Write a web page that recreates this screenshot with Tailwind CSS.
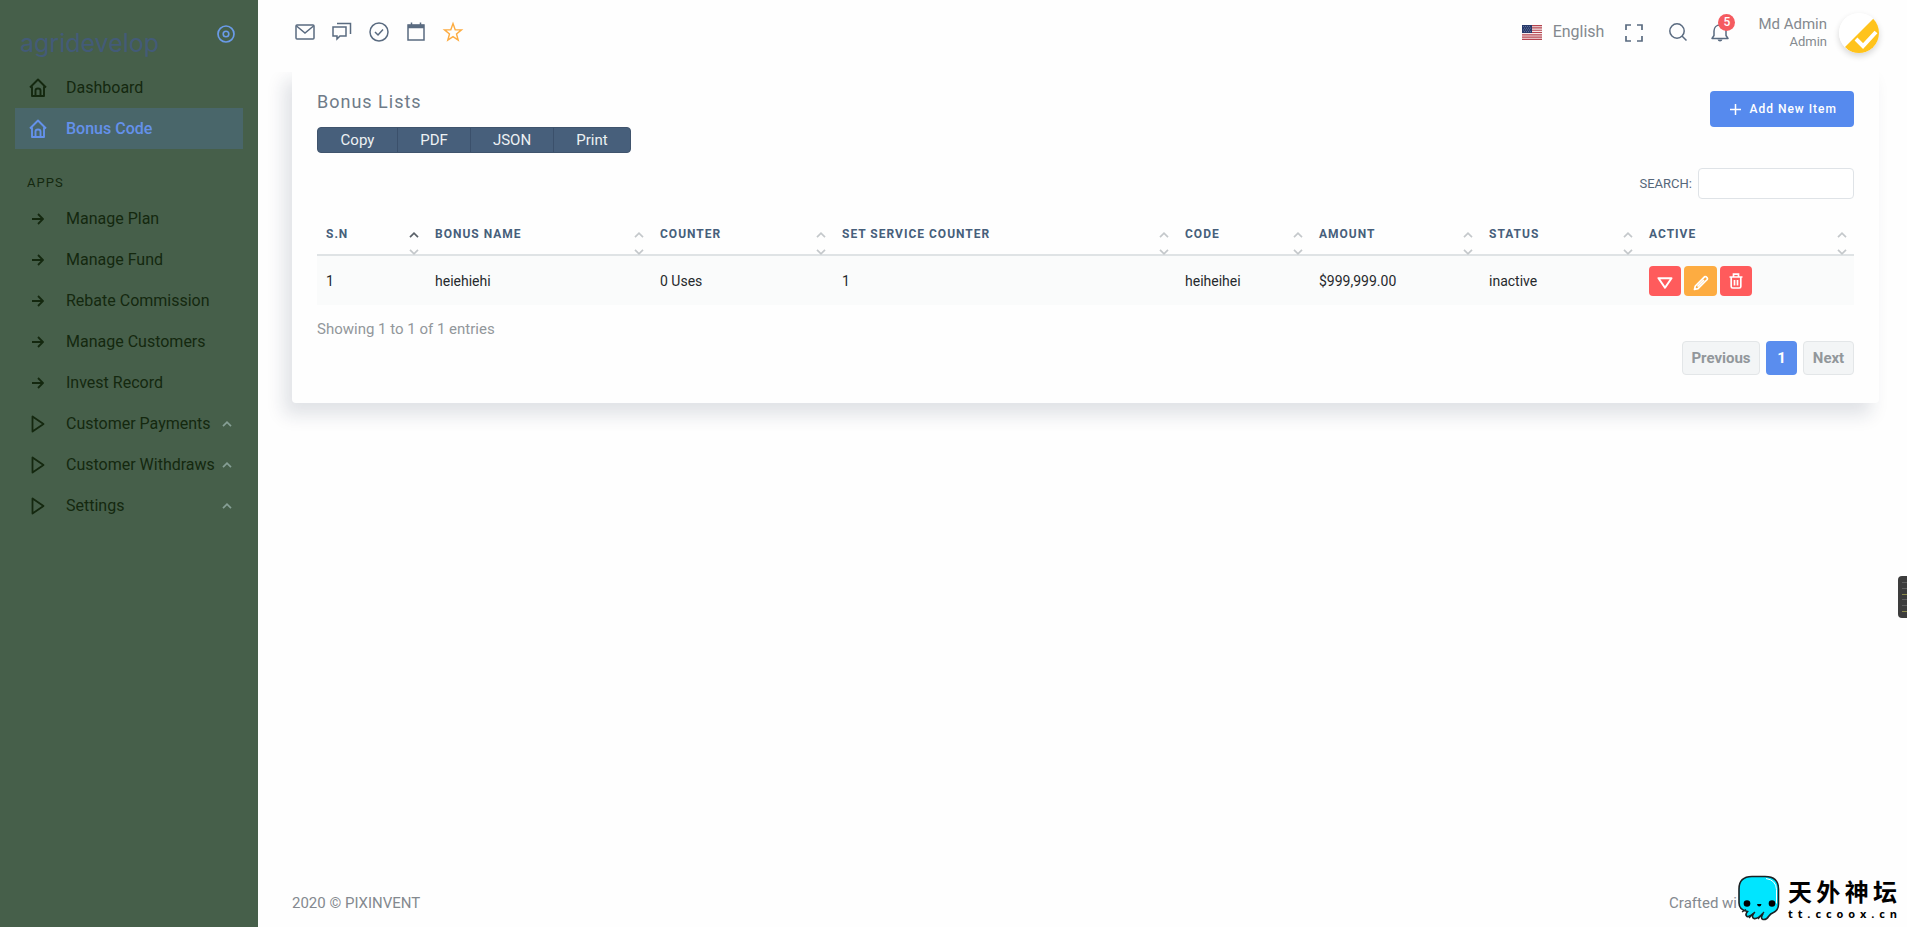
<!DOCTYPE html>
<html lang="en">
<head>
<meta charset="utf-8">
<meta name="viewport" content="width=device-width, initial-scale=1">
<title>Bonus Lists</title>
<script src="https://cdn.jsdelivr.net/npm/@tailwindcss/browser@4"></script>
</head>
<body class="bg-[#fefefe] font-['Roboto','Noto_Sans_CJK_SC',sans-serif] text-[15px] text-[#84898f]">
<svg class="hidden" aria-hidden="true">
  <symbol id="home" viewBox="0 0 18 20"><path d="M1 9.5 9 1.5l8 8M3 8.5V18h12V8.5M6.5 18v-5.500q0-2 2.500-2t2.500 2V18" fill="none" stroke="currentColor" stroke-width="1.900" stroke-linejoin="round"/></symbol>
  <symbol id="arrow" viewBox="0 0 12 12"><path d="M0 6h11M6 1l5 5-5 5" fill="none" stroke="currentColor" stroke-width="1.800"/></symbol>
  <symbol id="play" viewBox="0 0 14 18"><path d="M1.500 1.500v15L12.500 9z" fill="none" stroke="currentColor" stroke-width="1.800" stroke-linejoin="round"/></symbol>
  <symbol id="up" viewBox="0 0 10 6"><path d="M1 5.200 5 1.200l4 4" fill="none" stroke="currentColor" stroke-width="1.700"/></symbol>
  <symbol id="down" viewBox="0 0 10 6"><path d="M1 .8l4 4 4-4" fill="none" stroke="currentColor" stroke-width="1.700"/></symbol>
</svg>
<div class="flex min-h-screen">
  <aside class="w-[258px] shrink-0 bg-[#465f4a] text-[#14280f]">
    <div class="flex h-[67px] items-start justify-between pl-5 pr-[23px] pt-[25px]">
      <a href="#" class="font-['Inter'] text-[25px] leading-9 font-normal text-[#435b78]">agridevelop</a>
      <button type="button" aria-label="Toggle menu" class="text-[#6a9be8]">
        <svg class="block size-[18px]" viewBox="0 0 18 18" fill="none" stroke="currentColor"><circle cx="9" cy="9" r="8" stroke-width="1.700"/><circle cx="9" cy="9" r="2.800" stroke-width="1.600"/></svg>
      </button>
    </div>
    <nav class="px-[15px] text-base">
      <a href="#" class="flex h-[41px] items-center pl-[14px]"><svg class="mr-[19px] h-5 w-[18px]"><use href="#home"/></svg>Dashboard</a>
      <a href="#" class="flex h-[41px] items-center bg-[#49666a] pl-[14px] font-medium text-[#6491ea]"><svg class="mr-[19px] h-5 w-[18px]"><use href="#home"/></svg>Bonus Code</a>
      <h2 class="mt-6 mb-[5px] pl-3 text-[13px] leading-5 tracking-[1px]">APPS</h2>
      <a href="#" class="flex h-[41px] items-center pl-[17px]"><svg class="mr-[22px] size-3"><use href="#arrow"/></svg>Manage Plan</a>
      <a href="#" class="flex h-[41px] items-center pl-[17px]"><svg class="mr-[22px] size-3"><use href="#arrow"/></svg>Manage Fund</a>
      <a href="#" class="flex h-[41px] items-center pl-[17px]"><svg class="mr-[22px] size-3"><use href="#arrow"/></svg>Rebate Commission</a>
      <a href="#" class="flex h-[41px] items-center pl-[17px]"><svg class="mr-[22px] size-3"><use href="#arrow"/></svg>Manage Customers</a>
      <a href="#" class="flex h-[41px] items-center pl-[17px]"><svg class="mr-[22px] size-3"><use href="#arrow"/></svg>Invest Record</a>
      <a href="#" class="flex h-[41px] items-center pl-4 pr-[11px]"><svg class="mr-[21px] h-[18px] w-[14px]"><use href="#play"/></svg>Customer Payments<svg class="ml-auto h-[6px] w-[10px] text-[#869f95]"><use href="#up"/></svg></a>
      <a href="#" class="flex h-[41px] items-center pl-4 pr-[11px]"><svg class="mr-[21px] h-[18px] w-[14px]"><use href="#play"/></svg>Customer Withdraws<svg class="ml-auto h-[6px] w-[10px] text-[#869f95]"><use href="#up"/></svg></a>
      <a href="#" class="flex h-[41px] items-center pl-4 pr-[11px]"><svg class="mr-[21px] h-[18px] w-[14px]"><use href="#play"/></svg>Settings<svg class="ml-auto h-[6px] w-[10px] text-[#869f95]"><use href="#up"/></svg></a>
    </nav>
  </aside>

  <div class="flex min-w-0 flex-1 flex-col">
    <header class="z-10 flex h-[72px] items-start justify-between bg-[#fefefe] pl-9 pr-7">
      <div class="flex gap-[15px] pt-[21px] text-[#5a6b80]">
        <button type="button" aria-label="Email"><svg class="block size-[22px]" viewBox="0 0 22 22" fill="none" stroke="currentColor" stroke-width="1.500"><rect x="2" y="4" width="18" height="14" rx="1"/><path d="m2.500 5 8.500 7 8.500-7"/></svg></button>
        <button type="button" aria-label="Chat"><svg class="block size-[22px]" viewBox="0 0 22 22" fill="none" stroke="currentColor" stroke-width="1.500"><path d="M2 6h13v9H9l-3 3v-3H2zM6 2.500h13.500V13"/></svg></button>
        <button type="button" aria-label="Tasks"><svg class="block size-[22px]" viewBox="0 0 22 22" fill="none" stroke="currentColor" stroke-width="1.500"><circle cx="11" cy="11" r="9"/><path d="m7 11 3 3 5-5.500"/></svg></button>
        <button type="button" aria-label="Calendar"><svg class="block size-[22px]" viewBox="0 0 22 22" fill="none" stroke="currentColor" stroke-width="1.500"><path d="M3 4h16v15H3z"/><path d="M3 5.500h16" stroke-width="3.500"/><path d="M6.500 1.500V4M15.500 1.500V4"/></svg></button>
        <button type="button" aria-label="Favourites" class="text-[#fdac41]"><svg class="block size-[22px]" viewBox="0 0 22 22" fill="none" stroke="currentColor" stroke-width="1.400"><path d="m11 2.500 2.200 6.200 6.300.2-5 4 1.700 6.300L11 15.600l-5.200 3.600 1.700-6.300-5-4 6.300-.2z"/></svg></button>
      </div>
      <div class="flex items-start">
        <button type="button" class="mt-5 flex items-center gap-[11px] text-base leading-6">
          <svg class="h-[15px] w-5" viewBox="0 0 20 15"><path fill="#f6e9ea" d="M0 0h20v15H0z"/><path d="M0 .6h20M0 2.900h20M0 5.200h20M0 7.500h20M0 9.800h20M0 12.100h20M0 14.400h20" stroke="#b4444f" stroke-width="1.150"/><path fill="#273a6b" d="M0 0h10v8H0z"/><path d="M1 1.500h8M2 3.200h8M1 4.900h8M2 6.600h8" stroke="#8d99ba" stroke-width=".6" stroke-dasharray="1 1"/></svg>
          English
        </button>
        <button type="button" aria-label="Full screen" class="mt-6 ml-[21px] text-[#5a6b80]"><svg class="block size-[18px]" viewBox="0 0 18 18" fill="none" stroke="currentColor" stroke-width="1.700"><path d="M1 6V1h5M12 1h5v5M17 12v5h-5M6 17H1v-5"/></svg></button>
        <button type="button" aria-label="Search" class="mt-[22px] ml-[25px] text-[#5a6b80]"><svg class="block size-5" viewBox="0 0 20 20" fill="none" stroke="currentColor" stroke-width="1.500"><circle cx="9" cy="9" r="7.200"/><path d="m14 14 4.500 4.500"/></svg></button>
        <button type="button" aria-label="Notifications" class="relative mt-[22px] ml-[22px] text-[#5a6b80]">
          <svg class="block size-5" viewBox="0 0 20 20" fill="none" stroke="currentColor" stroke-width="1.500"><path d="M2 16.500h16l-2-3V9c0-3.500-2.500-6-6-6S4 5.500 4 9v4.500z" stroke-linejoin="round"/><path d="M10 1v2"/><path d="M7.500 17.500h5q-.5 2-2.500 2t-2.500-2z" fill="currentColor" stroke="none"/></svg>
          <span class="absolute -top-2 left-2 size-[17px] rounded-full bg-[#f55b60] text-center text-xs leading-[17px] font-medium text-white">5</span>
        </button>
        <button type="button" class="ml-7 flex items-start gap-3 text-right">
          <span class="mt-[14px] block"><span class="block text-[15px] leading-5">Md Admin</span><span class="block text-[13px] leading-4">Admin</span></span>
          <svg class="mt-[13px] size-10 rounded-full shadow-[0_3px_6px_rgba(0,0,0,0.16)]" viewBox="0 0 40 40"><path fill="#fff" d="M0 0h40v40H0z"/><path fill="#ffc31c" d="M36 4 6 34l6 6h28V4z"/><path d="m17 26 7 7 13-14" fill="none" stroke="#fff" stroke-width="4"/></svg>
        </button>
      </div>
    </header>

    <main class="-mt-1 flex-1 pl-[34px] pr-7">
      <section class="rounded-[4px] bg-[#fefefe] pt-[22px] pr-[25px] pb-7 pl-[25px] shadow-[-8px_12px_18px_0_rgba(25,42,70,0.13)]">
        <div class="flex items-start justify-between">
          <div>
            <h1 class="text-lg leading-6 tracking-[1px] text-[#6f7b88]">Bonus Lists</h1>
            <div class="mt-[13px] flex h-[26px] divide-x divide-[#3b506b] overflow-hidden rounded-[4px] border border-[#40546d] bg-[#475f7b] text-[15px] text-[#edf1f3]">
              <button type="button" class="w-[80px]">Copy</button>
              <button type="button" class="w-[73px]">PDF</button>
              <button type="button" class="w-[83px]">JSON</button>
              <button type="button" class="w-[76px]">Print</button>
            </div>
          </div>
          <button type="button" class="mt-px flex h-9 items-center gap-2 rounded-[4px] bg-[#568aee] pr-[17px] pl-5 text-xs font-medium tracking-[1px] text-white">
            <svg class="size-[11px]" viewBox="0 0 11 11"><path d="M5.500 0v11M0 5.500h11" stroke="currentColor" stroke-width="1.500"/></svg>Add New Item
          </button>
        </div>
        <div class="mt-[15px] flex items-center justify-end gap-[6px]">
          <label for="search" class="text-[13px] text-[#56677a]">SEARCH:</label>
          <input id="search" type="search" class="h-[31px] w-[156px] rounded-[4px] border border-[#dfe3e7] bg-white px-2 outline-none">
        </div>

        <table class="mt-[15px] w-full table-fixed text-left">
          <colgroup><col class="w-[109px]"><col class="w-[225px]"><col class="w-[182px]"><col class="w-[343px]"><col class="w-[134px]"><col class="w-[170px]"><col class="w-[160px]"><col></colgroup>
          <thead class="border-b-2 border-[#dfe3e5] text-xs text-[#475f7b]">
            <tr class="h-[41px]">
              <th class="relative pl-[9px] font-bold tracking-[1px]">S.N<svg class="absolute top-[18px] right-[7px] h-[6px] w-[10px] text-[#5a6169]"><use href="#up"/></svg><svg class="absolute top-[35px] right-[7px] h-[6px] w-[10px] text-[#c4c8cb]"><use href="#down"/></svg></th>
              <th class="relative pl-[9px] font-bold tracking-[1px]">BONUS NAME<svg class="absolute top-[18px] right-[7px] h-[6px] w-[10px] text-[#c4c8cb]"><use href="#up"/></svg><svg class="absolute top-[35px] right-[7px] h-[6px] w-[10px] text-[#c4c8cb]"><use href="#down"/></svg></th>
              <th class="relative pl-[9px] font-bold tracking-[1px]">COUNTER<svg class="absolute top-[18px] right-[7px] h-[6px] w-[10px] text-[#c4c8cb]"><use href="#up"/></svg><svg class="absolute top-[35px] right-[7px] h-[6px] w-[10px] text-[#c4c8cb]"><use href="#down"/></svg></th>
              <th class="relative pl-[9px] font-bold tracking-[1px]">SET SERVICE COUNTER<svg class="absolute top-[18px] right-[7px] h-[6px] w-[10px] text-[#c4c8cb]"><use href="#up"/></svg><svg class="absolute top-[35px] right-[7px] h-[6px] w-[10px] text-[#c4c8cb]"><use href="#down"/></svg></th>
              <th class="relative pl-[9px] font-bold tracking-[1px]">CODE<svg class="absolute top-[18px] right-[7px] h-[6px] w-[10px] text-[#c4c8cb]"><use href="#up"/></svg><svg class="absolute top-[35px] right-[7px] h-[6px] w-[10px] text-[#c4c8cb]"><use href="#down"/></svg></th>
              <th class="relative pl-[9px] font-bold tracking-[1px]">AMOUNT<svg class="absolute top-[18px] right-[7px] h-[6px] w-[10px] text-[#c4c8cb]"><use href="#up"/></svg><svg class="absolute top-[35px] right-[7px] h-[6px] w-[10px] text-[#c4c8cb]"><use href="#down"/></svg></th>
              <th class="relative pl-[9px] font-bold tracking-[1px]">STATUS<svg class="absolute top-[18px] right-[7px] h-[6px] w-[10px] text-[#c4c8cb]"><use href="#up"/></svg><svg class="absolute top-[35px] right-[7px] h-[6px] w-[10px] text-[#c4c8cb]"><use href="#down"/></svg></th>
              <th class="relative pl-[9px] font-bold tracking-[1px]">ACTIVE<svg class="absolute top-[18px] right-[7px] h-[6px] w-[10px] text-[#c4c8cb]"><use href="#up"/></svg><svg class="absolute top-[35px] right-[7px] h-[6px] w-[10px] text-[#c4c8cb]"><use href="#down"/></svg></th>
            </tr>
          </thead>
          <tbody class="text-sm text-[#26292c]">
            <tr class="h-[50px] bg-[#fafbfb]">
              <td class="pl-[9px]">1</td>
              <td class="pl-[9px]">heiehiehi</td>
              <td class="pl-[9px]">0 Uses</td>
              <td class="pl-[9px]">1</td>
              <td class="pl-[9px]">heiheihei</td>
              <td class="pl-[9px]">$999,999.00</td>
              <td class="pl-[9px]">inactive</td>
              <td class="pl-[9px]">
                <div class="flex gap-[3px] text-white">
                  <button type="button" aria-label="Deactivate" class="grid h-[30px] w-8 place-items-center rounded-[4px] bg-[#ff5b5c]"><svg class="mt-1 h-3 w-4" viewBox="0 0 16 12"><path d="M1.500 1.200h13L8 10.800z" fill="none" stroke="currentColor" stroke-width="2" stroke-linejoin="round"/></svg></button>
                  <button type="button" aria-label="Edit" class="grid h-[30px] w-[33px] place-items-center rounded-[4px] bg-[#fdac41]"><svg class="mt-1 size-4" viewBox="0 0 16 16" fill="none" stroke="currentColor" stroke-width="1.700" stroke-linejoin="round"><path d="m1.500 14.500.8-3.500L11.500 1.800q.8-.6 1.600 0l1.100 1.100q.6.8 0 1.600L5 13.700zM4.500 11.500l6.500-6.500"/></svg></button>
                  <button type="button" aria-label="Delete" class="grid h-[30px] w-8 place-items-center rounded-[4px] bg-[#ff5b5c]"><svg class="size-4" viewBox="0 0 16 16" fill="none" stroke="currentColor" stroke-width="1.700"><path d="M1.500 4h13M5.500 4V1.200h5V4M3.200 4v9.500q0 1.500 1.500 1.500h6.600q1.500 0 1.500-1.500V4M6.500 7v5.500M9.500 7v5.500"/></svg></button>
                </div>
              </td>
            </tr>
          </tbody>
        </table>
        <p class="mt-3 text-[15px] leading-6 text-[#92979b]">Showing 1 to 1 of 1 entries</p>
        <nav aria-label="Pages" class="flex justify-end gap-[6px] text-[15px] font-bold text-[#92979b]">
          <button type="button" class="h-[34px] w-[78px] rounded-[4px] border border-[#e3e6e8] bg-[#f3f5f6]">Previous</button>
          <button type="button" aria-current="page" class="h-[34px] w-[31px] rounded-[4px] bg-[#5a8dee] text-white">1</button>
          <button type="button" class="h-[34px] w-[51px] rounded-[4px] border border-[#e3e6e8] bg-[#f3f5f6]">Next</button>
        </nav>
      </section>
    </main>

    <footer class="flex items-end justify-between pl-[34px] pr-[10px] pb-[6px]">
      <p class="mb-[6px] text-[15px] leading-6">2020 © PIXINVENT</p>
      <div class="flex items-end">
        <p class="mb-[6px] text-[15px] leading-6">Crafted wi</p>
        <svg class="h-[46px] w-[43px]" viewBox="0 0 43 46"><path d="M2 14Q2 1.500 15 1.500h13Q41.500 1.500 41.500 14v15q0 6-5 8.500-3 1-5 4-2 3.500-5.500 3-3-1 0-6-6 6-9 5-3-1.500 0-5.500-6 5-7.500 3-1.500-1.500 1-4.500Q2 35 2 28z" fill="#00e5ff" stroke="#1b2023" stroke-width="1.600"/><path d="M29 3.500q10 1.500 10.500 11v14" fill="none" stroke="#fff" stroke-width="1"/><path d="m5 37 4-2.500M12 43l6-6M21 44l6-7" stroke="#1b2023" stroke-width="1.300"/><circle cx="10" cy="28.500" r="3.300"/><circle cx="35" cy="28.500" r="3.300"/><path d="M20 29h4.500q-.5 2.500-2.300 2.500T20 29z"/></svg>
        <div class="ml-2 w-[109px] text-black">
          <p class="flex justify-between text-2xl leading-7 font-bold"><span>天</span><span>外</span><span>神</span><span>坛</span></p>
          <p class="flex justify-between font-['Open_Sans'] text-[11px] leading-[14px] font-bold"><span>t</span><span>t</span><span>.</span><span>c</span><span>c</span><span>o</span><span>o</span><span>x</span><span>.</span><span>c</span><span>n</span></p>
        </div>
      </div>
    </footer>
  </div>
</div>
<button type="button" aria-label="Customizer" class="fixed top-[576px] right-0 flex h-[42px] w-[9px] flex-col justify-around rounded-l-[4px] bg-[#3d3d3d] py-1 pl-1">
  <span class="h-px bg-[#606060]"></span><span class="h-px bg-[#606060]"></span><span class="h-px bg-[#8b8b4d]"></span><span class="h-px bg-[#606060]"></span><span class="h-px bg-[#606060]"></span><span class="h-px bg-[#8b8b4d]"></span>
</button>
</body>
</html>
